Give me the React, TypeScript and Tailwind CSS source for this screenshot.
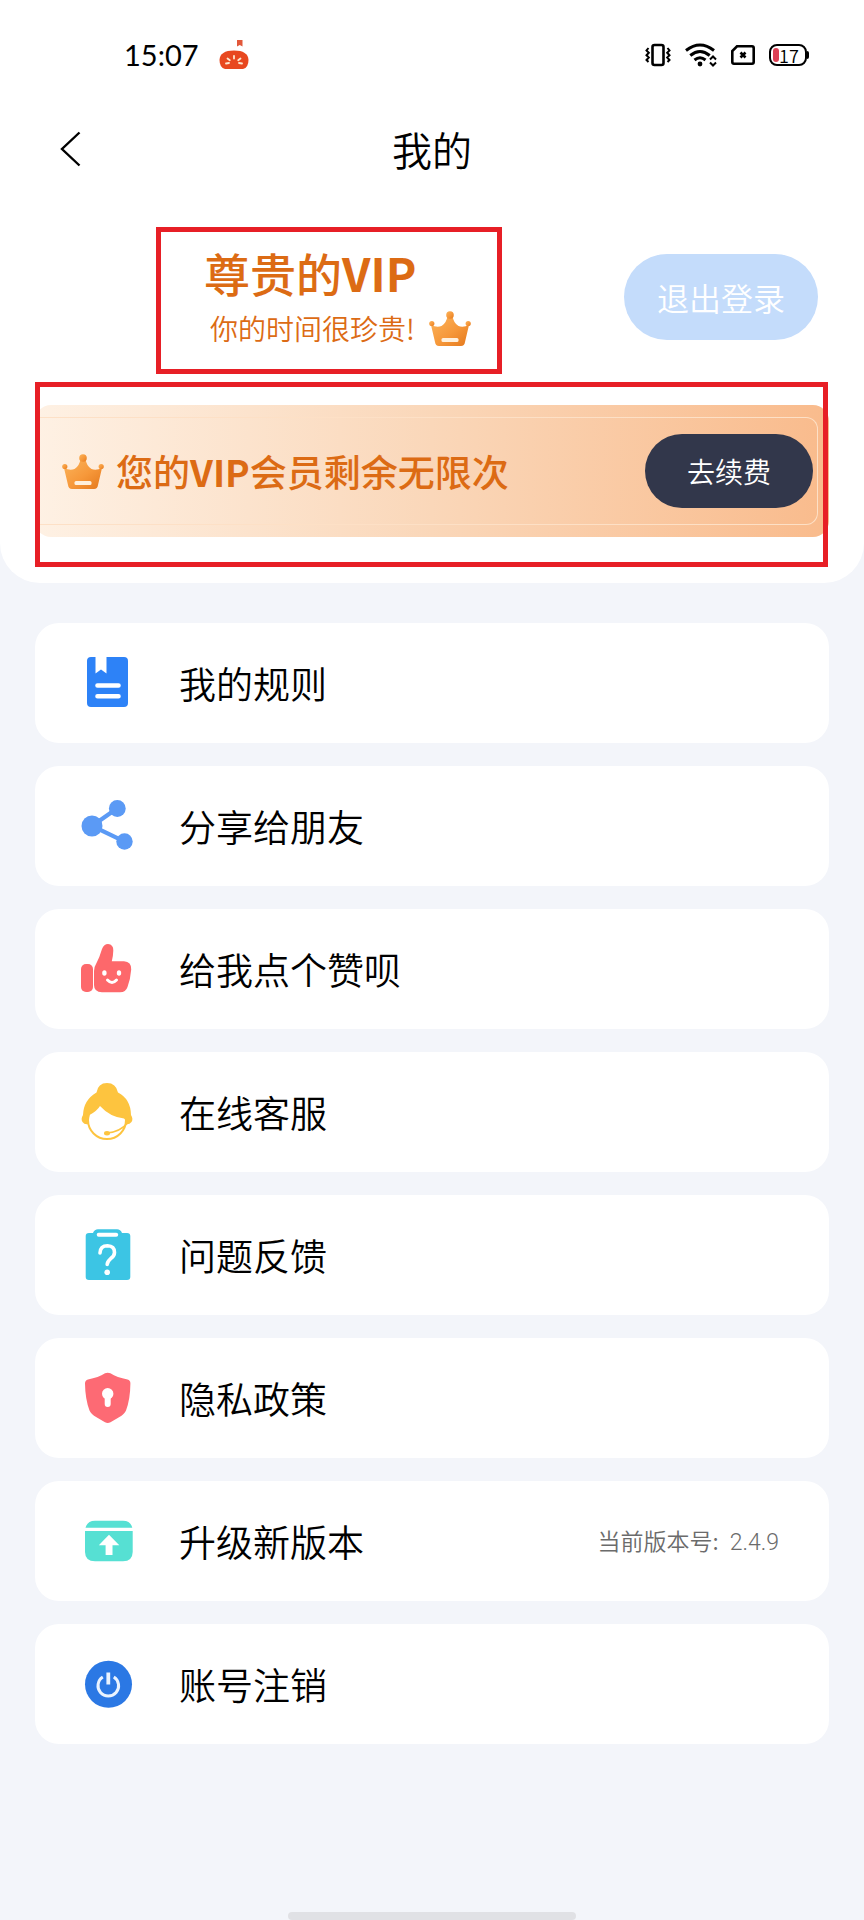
//This is the profile page with the VIP banner and the settings menu.
import React from 'react';

const CrownIcon: React.FC<{ id: string }> = ({ id }) => (
  <svg width="42" height="35" viewBox="0 0 42 35" className="shrink-0" aria-hidden="true">
    <defs>
      <linearGradient id={id} x1="0" y1="0" x2="1" y2="1">
        <stop offset="0" stopColor="#fbb45c" />
        <stop offset="0.55" stopColor="#f6983a" />
        <stop offset="1" stopColor="#e4781c" />
      </linearGradient>
    </defs>
    <g fill={`url(#${id})`}>
      <path d="M2 14 Q8 17 12.5 15 Q17.500 12 18.5 5 L23.5 5 Q24.5 12 29.5 15 Q34 17 40 14 L36 31 Q35.5 35 32 35 H10 Q6.5 35 6 31 Z" />
      <circle cx="21" cy="4" r="3.8" />
      <circle cx="2.8" cy="12.5" r="2.6" />
      <circle cx="39.2" cy="12.5" r="2.6" />
    </g>
    <rect x="12.5" y="27" width="17" height="4" rx="1.5" fill="#fff0dc" />
  </svg>
);

const RulesIcon = () => (
  <svg width="60" height="60" viewBox="0 0 60 60" aria-hidden="true">
    <path d="M13 4 H17.5 V20.5 L23 16.5 L28.5 20.5 V4 H46 Q50 4 50 8 V50 Q50 54 46 54 H13 Q9 54 9 50 V8 Q9 4 13 4 Z" fill="#2d82f7" />
    <path d="M19.5 32.5 H40.5 M19.5 43.3 H40.5" stroke="#fff" strokeWidth="4.6" strokeLinecap="round" />
  </svg>
);

const ShareIcon = () => (
  <svg width="60" height="60" viewBox="0 0 60 60" fill="#5b9af5" aria-hidden="true">
    <path d="M39.3 12.3 L14 30 L46.7 45.7" fill="none" stroke="#5b9af5" strokeWidth="4.2" />
    <circle cx="39.3" cy="12.5" r="8.4" />
    <circle cx="14" cy="30" r="10.5" />
    <circle cx="46.5" cy="45.5" r="8.2" />
  </svg>
);

const LikeIcon = () => (
  <svg width="60" height="60" viewBox="0 0 60 60" fill="#fd686b" aria-hidden="true">
    <rect x="3" y="25" width="12" height="28" rx="5" />
    <path d="M16 32 Q16 28 18.5 24 Q21.5 18.5 24 10 Q26 5 30 5 Q35.5 5.5 35.3 11.5 Q35.2 17 33.8 22.3 H46 Q53.5 22.8 53.2 30.5 Q52.5 40 49.5 48 Q47.8 53.2 42 53.3 H24 Q16 53 16 46 Z" />
    <ellipse cx="26.4" cy="34" rx="2.2" ry="2.8" fill="#fff" />
    <ellipse cx="41" cy="34" rx="2.2" ry="2.8" fill="#fff" />
    <path d="M29.5 41 Q34 45.8 38.5 41" fill="none" stroke="#fff" strokeWidth="3" strokeLinecap="round" />
  </svg>
);

const ServiceIcon = () => (
  <svg width="60" height="60" viewBox="0 0 60 60" aria-hidden="true">
    <circle cx="29" cy="38" r="19" fill="#fff" stroke="#fdc43f" strokeWidth="2" />
    <path d="M18.5 10.5 Q20 1 29 1 Q38 1 40 10.5 Q52.7 17 53 33 Q55.5 37 53.5 40 Q51 43 47.5 42 Q48.5 38 46 36.5 Q32 35 22 24 Q19 29 11.5 33 Q10 38.5 11 42 Q6.5 43 4.5 40 Q2.5 37 5 33 Q5.5 18 18.5 10.5 Z" fill="#fdc43f" />
    <path d="M49.5 41 Q42 50 29 51" fill="none" stroke="#fdc43f" strokeWidth="1.6" />
    <ellipse cx="29" cy="51.2" rx="3" ry="2.2" fill="#fdc43f" />
  </svg>
);

const FeedbackIcon = () => (
  <svg width="60" height="60" viewBox="0 0 60 60" aria-hidden="true">
    <path d="M11 8 H15 Q16.5 4.3 20 4.3 H39 Q42.5 4.3 44 8 H49 Q52.3 8 52.3 11 V52 Q52.3 55 49 55 H11 Q7.7 55 7.7 52 V11 Q7.7 8 11 8 Z" fill="#3cc5e4" />
    <rect x="18.7" y="7.8" width="21.5" height="4" rx="2" fill="#fff" />
    <path d="M22 28 Q22.3 20.8 29.5 20.8 Q36.5 21 36.5 27.5 Q36.5 31 32.5 33.8 Q29.2 36.5 29.2 39.5" fill="none" stroke="#fff" strokeWidth="3.6" strokeLinecap="round" />
    <circle cx="29.2" cy="47.3" r="2.8" fill="#fff" />
  </svg>
);

const PrivacyIcon = () => (
  <svg width="60" height="60" viewBox="0 0 60 60" aria-hidden="true">
    <path d="M27 5.3 Q29.7 4 32.4 5.3 Q39 9.5 49.5 11.5 Q52.5 12.3 52.4 15.5 Q52.3 31 48 42.5 Q46.5 46 41 49.3 L32.5 54.3 Q29.7 55.8 27 54.3 L18.5 49.3 Q13 46 11.5 42.5 Q7.2 31 7 15.5 Q7 12.3 10 11.5 Q20.5 9.5 27 5.3 Z" fill="#fd6a74" />
    <circle cx="29.7" cy="25.8" r="5.7" fill="#fff" />
    <path d="M29.7 28 V36" stroke="#fff" strokeWidth="6" strokeLinecap="round" />
  </svg>
);

const UpgradeIcon = () => (
  <svg width="60" height="60" viewBox="0 0 60 60" aria-hidden="true">
    <path d="M7.5 16.7 Q9.5 9.7 17 9.7 H45 Q52.5 9.7 54.3 16.7 Z M7 20 H54.7 V41 Q54.5 50.3 45 50.3 H17 Q7.2 50.3 7 41 Z" fill="#56e0d3" />
    <path d="M31 23.7 L41.3 34.3 H34.5 V44 H27.6 V34.3 H20.8 Z" fill="#fff" />
  </svg>
);

const PowerIcon = () => (
  <svg width="60" height="60" viewBox="0 0 60 60" aria-hidden="true">
    <circle cx="30.5" cy="30.3" r="23.5" fill="#2b78e4" />
    <path d="M24.8 23 A10.3 10.3 0 1 0 35.8 23" fill="none" stroke="#e9f3ff" strokeWidth="3" />
    <path d="M30.3 18.5 V30.5" stroke="#e9f3ff" strokeWidth="3.8" />
  </svg>
);

const menuItems = [
  { label: '我的规则', Icon: RulesIcon },
  { label: '分享给朋友', Icon: ShareIcon },
  { label: '给我点个赞呗', Icon: LikeIcon },
  { label: '在线客服', Icon: ServiceIcon },
  { label: '问题反馈', Icon: FeedbackIcon },
  { label: '隐私政策', Icon: PrivacyIcon },
  { label: '升级新版本', Icon: UpgradeIcon, version: '2.4.9' },
  { label: '账号注销', Icon: PowerIcon },
];

const StatusBar = () => (
  <div className="h-[110px] pl-[124px] pr-[55px] flex items-center justify-between text-black">
    <div className="flex items-center gap-5">
      <span className="font-['Lato',sans-serif] font-normal text-[29px] leading-[32px]">15:07</span>
      <svg width="30" height="30" viewBox="0 0 30 30" aria-hidden="true">
        <path d="M18 0 H23.5 V6.5 L20.8 5 L18 6.5 Z" fill="#e2583a" />
        <path d="M6 29 Q0.5 27.5 0.5 20 Q1 10.5 15 10.5 Q29 10.5 29.5 20 Q29.5 27.5 24 29 Z" fill="#e8481f" />
        <path d="M7 23.5 L10 23 M8.5 18.5 L10.8 20.3 M15 15.8 V18.5 M21.5 18.5 L19.2 20.3 M23 23.5 L20 23" stroke="#fde8d0" strokeWidth="1.8" strokeLinecap="round" />
      </svg>
    </div>
    <div className="flex items-center gap-[14px]">
      <svg width="26" height="24" viewBox="0 0 26 24" fill="none" stroke="#000" strokeWidth="2" aria-hidden="true">
        <rect x="7.5" y="2" width="11" height="20" rx="2" strokeWidth="2.6" />
        <path d="M3.5 5 L1.5 7.5 L3.8 9.8 L1.5 12.2 L3.8 14.5 L1.5 17 L3.5 19 M22.5 5 L24.5 7.5 L22.2 9.8 L24.5 12.2 L22.2 14.5 L24.5 17 L22.5 19" />
      </svg>
      <svg width="32" height="24" viewBox="0 0 32 24" fill="none" stroke="#000" strokeWidth="3" aria-hidden="true">
        <path d="M1 7.5 Q15 -3.5 29 7.5" />
        <path d="M5.3 12.5 Q15 4.5 24.7 12.5" />
        <path d="M9.5 17 Q15 12.5 20.5 17" />
        <circle cx="15" cy="21" r="2.4" fill="#000" stroke="none" />
        <path d="M25 16.5 L28 13.5 L31 16.5 M25 19.5 L28 22.5 L31 19.5" strokeWidth="2" />
      </svg>
      <svg width="24" height="20" viewBox="0 0 24 20" fill="none" stroke="#000" strokeWidth="2.6" aria-hidden="true">
        <path d="M6 1.3 H21 Q22.7 1.3 22.7 3 V17 Q22.7 18.7 21 18.7 H3 Q1.3 18.7 1.3 17 V6 Z" />
        <path d="M9.5 7.5 L14.5 12.5 M14.5 7.5 L9.5 12.5" />
      </svg>
      <div className="flex items-center">
        <div className="w-[38px] h-[22px] rounded-[8px] border-2 border-black flex items-center pl-[2px]">
          <span className="w-[6px] h-[14px] rounded-[3px] bg-[#dd4155]" />
          <span className="text-[18px] leading-[18px]">17</span>
        </div>
        <span className="w-[2px] h-[8px] rounded-r-full bg-black" />
      </div>
    </div>
  </div>
);

const App: React.FC = () => {
  return (
    <div className="min-h-screen flex flex-col bg-[#f3f5fa] text-black font-[350] font-['Noto_Sans_CJK_SC',sans-serif]">
      <header className="bg-white rounded-b-[40px] pb-[46px]">
        <StatusBar />

        <div className="h-[78px] px-[58px] grid grid-cols-[1fr_auto_1fr] items-center">
          <button type="button" aria-label="返回" className="justify-self-start">
            <svg width="24" height="36" viewBox="0 0 24 36" fill="none" stroke="#000" strokeWidth="2.4" aria-hidden="true">
              <path d="M21.5 1.5 L4 18 L21.5 34.5" />
            </svg>
          </button>
          <h1 className="text-[40px] leading-[48px] font-[350]">我的</h1>
        </div>

        <div className="mt-[39px] pl-[156px] pr-[46px] flex items-center justify-between">
          <div className="w-[346px] h-[147px] border-[5px] border-[#e71f26] pl-[43px] pt-[13px] text-[#dc6b14]">
            <p className="text-[46px] leading-[54px] font-medium">
              尊贵的<strong className="font-bold">VIP</strong>
            </p>
            <div className="pl-[6px] mt-[11px] flex items-center gap-[14px]">
              <p className="text-[28px] leading-[36px]">你的时间很珍贵!</p>
              <CrownIcon id="crown-profile" />
            </div>
          </div>
          <button type="button" className="w-[194px] h-[86px] mb-2 rounded-full bg-[#c4dcfb] text-white text-[32px] leading-[40px]">
            退出登录
          </button>
        </div>

        <div className="relative mx-[35px] mt-[31px]">
          <div className="h-[132px] rounded-[16px] bg-linear-to-r from-[#fef1e4] via-[#fad7b9] to-[#f9bb8c] py-3 pr-[11px]">
            <div className="h-full rounded-r-[12px] border-y border-r border-[#fde0c6] pl-[27px] pr-[4px] flex items-center justify-between">
              <div className="flex items-center gap-3">
                <CrownIcon id="crown-banner" />
                <p className="text-[37px] leading-[44px] font-medium text-[#dc6b14]">
                  您的<strong className="font-bold">VIP</strong>会员剩余无限次
                </p>
              </div>
              <button type="button" className="w-[168px] h-[74px] rounded-full bg-[#32374b] text-white text-[28px] leading-[36px]">
                去续费
              </button>
            </div>
          </div>
          <div className="absolute -top-[23px] -bottom-[30px] left-0 right-px border-[5px] border-[#e71f26] pointer-events-none" />
        </div>
      </header>

      <main className="px-[35px] pt-10">
        <ul className="flex flex-col gap-[23px]">
          {menuItems.map(({ label, Icon, version }) => (
            <li key={label}>
              <button
                type="button"
                className="w-full h-[120px] pl-[43px] pr-[50px] flex items-center justify-between rounded-[24px] bg-white"
              >
                <span className="flex items-center gap-[41px]">
                  <Icon />
                  <span className="text-[37px] leading-[44px]">{label}</span>
                </span>
                {version && (
                  <span className="flex items-baseline gap-[11px] text-[23px] leading-[28px] text-[#6b6b6b]">
                    <span>当前版本号:</span>
                    <span className="font-['Roboto',sans-serif]">{version}</span>
                  </span>
                )}
              </button>
            </li>
          ))}
        </ul>
      </main>

      <div className="mt-auto mx-auto w-1/3 h-2 rounded-full bg-[#e0e1e5]" />
    </div>
  );
};

export default App;
